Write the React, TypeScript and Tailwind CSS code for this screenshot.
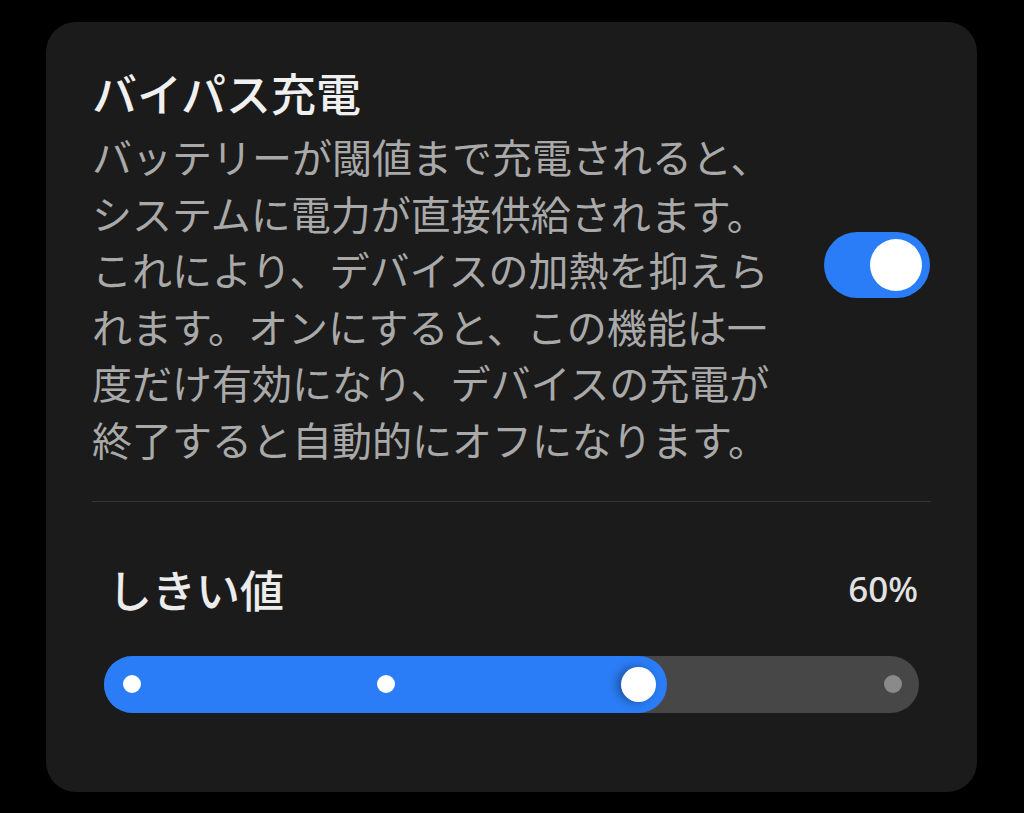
import React from "react";

const font = { fontFamily: '"Noto Sans CJK JP", "Noto Sans", sans-serif' };

export default function App() {
  const lines = [
    "バッテリーが閾値まで充電されると、",
    "システムに電力が直接供給されます。",
    "これにより、デバイスの加熱を抑えら",
    "れます。オンにすると、この機能は一",
    "度だけ有効になり、デバイスの充電が",
    "終了すると自動的にオフになります。",
  ];
  return (
    <div className="w-[1024px] h-[813px] bg-black pt-[22px] pl-[46px]" style={font}>
      <div className="w-[931px] h-[770px] rounded-[30px] bg-[#1b1b1b] pt-[44px] px-[46px]">
        <div className="flex items-center justify-between">
          <div className="w-[700px]">
            <div className="text-[45px] leading-[53px] font-medium text-[#f0f0f0]">バイパス充電</div>
            <div className="mt-[9px] text-[40px] leading-[56.6px] text-[#a9a9a9] whitespace-nowrap">
              {lines.map((l, i) => (
                <div key={i}>{l}</div>
              ))}
            </div>
          </div>
          <div className="w-[106px] h-[66px] rounded-full bg-[#2a7df6] flex items-center justify-end pr-[8px] mr-[1px] mb-[4px]">
            <div className="w-[52px] h-[52px] rounded-full bg-white" />
          </div>
        </div>
        <div className="mt-[33px] h-px bg-[#363636]" />
        <div className="px-[12px]">
          <div className="mt-[61px] flex items-center justify-between">
            <div className="text-[44px] leading-[52px] font-medium text-[#ececec] pl-[4px]">しきい値</div>
            <div className="text-[35px] leading-[52px] font-medium text-[#e2e2e2] pr-[1px]" style={{ fontFamily: '"Noto Sans", sans-serif' }}>60%</div>
          </div>
          <div className="mt-[41px] relative h-[57px] rounded-full bg-[#474747]">
            <div className="absolute left-0 top-0 h-[57px] w-[563px] rounded-full bg-[#2a7df6]" />
            <div className="absolute left-[19px] top-[19px] w-[18px] h-[18px] rounded-full bg-white" />
            <div className="absolute left-[273px] top-[19px] w-[18px] h-[18px] rounded-full bg-white" />
            <div className="absolute left-[780px] top-[19px] w-[18px] h-[18px] rounded-full bg-[#8a8a8a]" />
            <div className="absolute left-[517px] top-[11px] w-[35px] h-[35px] rounded-full bg-white shadow-[-4px_0_8px_rgba(0,0,0,0.35)]" />
          </div>
        </div>
      </div>
    </div>
  );
}
